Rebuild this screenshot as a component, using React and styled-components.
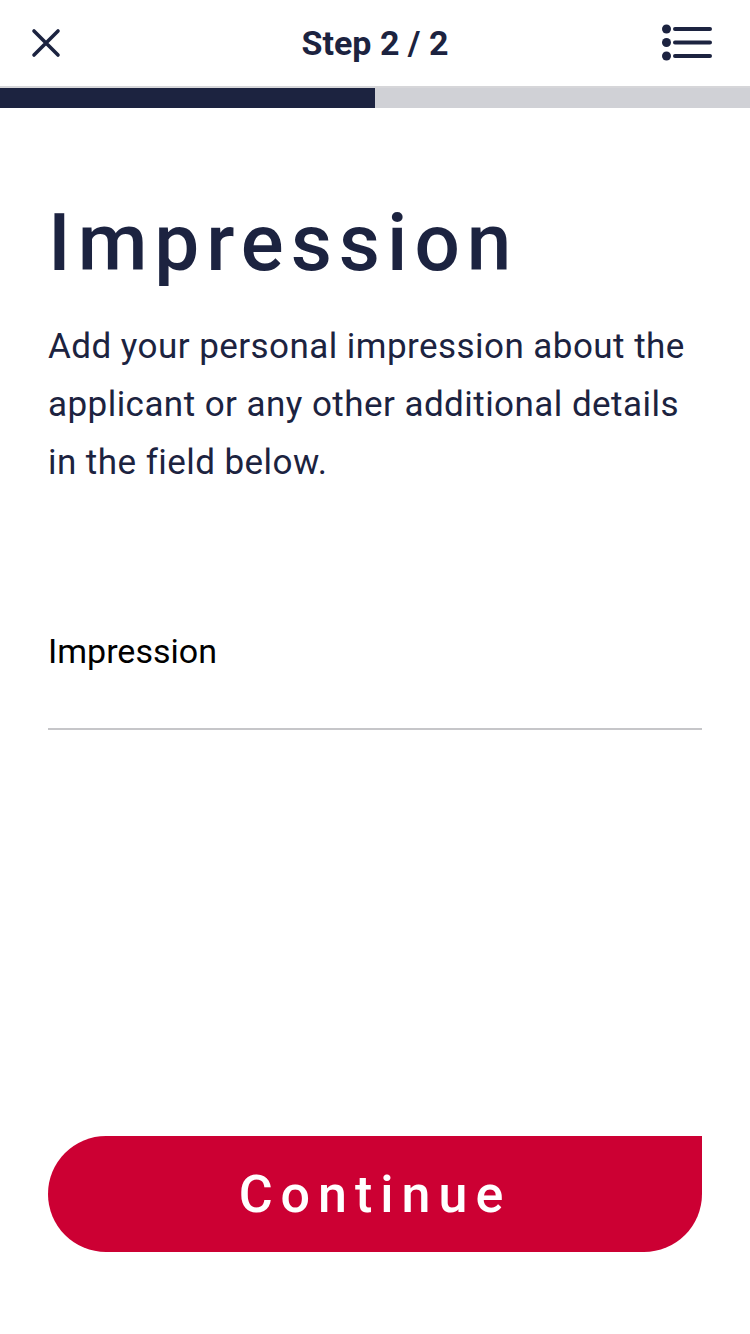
import React from "react";
import styled, { createGlobalStyle } from "styled-components";

const Global = createGlobalStyle`
  html, body { margin: 0; padding: 0; background: #fff; }
  body { font-family: Roboto, "Noto Sans", sans-serif; -webkit-font-smoothing: antialiased; }
  * { box-sizing: border-box; }
`;

const Page = styled.div`
  width: 750px;
  height: 1334px;
  display: flex;
  flex-direction: column;
  background: #fff;
  color: #1c2340;
`;

const Header = styled.header`
  height: 86px;
  display: grid;
  grid-template-columns: 1fr auto 1fr;
  align-items: center;
  padding: 0 30px;
  border-bottom: 2px solid #d6d6d9;
  box-sizing: content-box;
`;

const IconButton = styled.button`
  background: none;
  border: 0;
  padding: 0;
  width: ${(p) => p.$w}px;
  height: 40px;
  display: flex;
  align-items: center;
  justify-content: ${(p) => (p.$align === "end" ? "flex-start" : "center")};
  justify-self: ${(p) => p.$align};
  color: #1c2340;
`;

const StepTitle = styled.h1`
  margin: 0;
  font-size: 34px;
  font-weight: 700;
  letter-spacing: 0;
  color: #1c2340;
`;

const Progress = styled.div`
  height: 20px;
  background: #d0d1d6;
  display: flex;
`;

const ProgressFill = styled.div`
  height: 100%;
  background: #1c2340;
`;

const Content = styled.main`
  flex: 1;
  display: flex;
  flex-direction: column;
  padding: 88px 48px 82px;
`;

const Title = styled.h2`
  margin: 0;
  font-size: 80px;
  line-height: 94px;
  font-weight: 500;
  letter-spacing: 7px;
  color: #1c2340;
`;

const Lead = styled.p`
  margin: 28px 0 0;
  font-size: 35px;
  line-height: 58px;
  font-weight: 400;
  letter-spacing: 0.45px;
  color: #1c2340;
`;

const Field = styled.label`
  margin-top: 139px;
  display: flex;
  flex-direction: column;
`;

const FieldLabel = styled.span`
  font-size: 34px;
  line-height: 40px;
  color: #000;
`;

const FieldInput = styled.textarea`
  margin-top: 39px;
  border: 0;
  border-bottom: 2px solid #c6c6c9;
  height: 20px;
  resize: none;
  padding: 0;
  font: inherit;
  outline: none;
`;

const Spacer = styled.div`
  flex: 1;
`;

const PrimaryButton = styled.button`
  height: 116px;
  width: 100%;
  flex-shrink: 0;
  border: 0;
  background: #cc0033;
  color: #fff;
  border-radius: 58px 0 58px 58px;
  font-family: Roboto, sans-serif;
  font-size: 52px;
  font-weight: 500;
  letter-spacing: 8px;
  padding: 0;
`;

const CloseIcon = () => (
  <svg width="30" height="30" viewBox="0 0 30 30">
    <path d="M3 3 L27 27 M27 3 L3 27" stroke="#1c2340" strokeWidth="3.6" strokeLinecap="round" />
  </svg>
);

const MenuIcon = () => (
  <svg width="52" height="38" viewBox="0 0 52 38">
    <circle cx="6.5" cy="5" r="4.5" fill="#1c2340" />
    <circle cx="6.5" cy="18.5" r="4.5" fill="#1c2340" />
    <circle cx="6.5" cy="32" r="4.5" fill="#1c2340" />
    <path d="M15 5 H50 M15 18.5 H50 M15 32 H50" stroke="#1c2340" strokeWidth="4" strokeLinecap="round" />
  </svg>
);

export default function App() {
  return (
    <Page>
      <Global />
      <Header>
        <IconButton $w={32} $align="start" aria-label="Close">
          <CloseIcon />
        </IconButton>
        <StepTitle>Step 2 / 2</StepTitle>
        <IconButton $w={60} $align="end" aria-label="Menu">
          <MenuIcon />
        </IconButton>
      </Header>
      <Progress>
        <ProgressFill style={{ width: "50%" }} />
      </Progress>
      <Content>
        <Title>Impression</Title>
        <Lead>
          Add your personal impression about the applicant or any other additional details in the field below.
        </Lead>
        <Field>
          <FieldLabel>Impression</FieldLabel>
          <FieldInput />
        </Field>
        <Spacer />
        <PrimaryButton>Continue</PrimaryButton>
      </Content>
    </Page>
  );
}
